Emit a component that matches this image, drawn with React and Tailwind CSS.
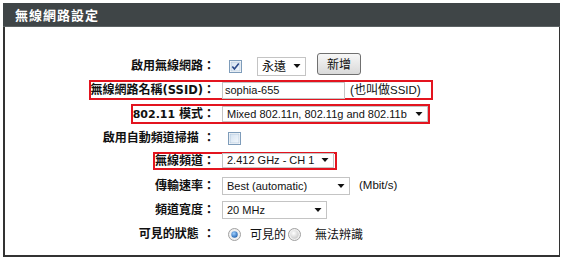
import React from "react";

const Arrow = () => (
  <svg width="8" height="5" viewBox="0 0 8 5" className="shrink-0">
    <path d="M0.5 0 L7.5 0 L4 4 Z" fill="#111" />
  </svg>
);

const Select = ({ w, text, h = "h-[18px]" }) => (
  <div
    className={`${w} ${h} flex items-center justify-between border border-[#c4c4c4] bg-white pl-[4px] pr-[4px] text-[11px] text-[#111] leading-none`}
  >
    <span className="whitespace-nowrap">{text}</span>
    <Arrow />
  </div>
);

const Checkbox = ({ checked }) => (
  <svg width="13" height="13" viewBox="0 0 13 13" className="shrink-0">
    <defs>
      <linearGradient id={checked ? "cbg1" : "cbg2"} x1="0" y1="0" x2="1" y2="1">
        <stop offset="0" stopColor="#d3e1f0" />
        <stop offset="1" stopColor="#f4f8fc" />
      </linearGradient>
    </defs>
    <rect x="0.5" y="0.5" width="12" height="12" fill="#fff" stroke="#7e9cba" />
    <rect x="2" y="2" width="9" height="9" fill={`url(#${checked ? "cbg1" : "cbg2"})`} stroke="#a9c0d8" strokeWidth="0.6" />
    {checked && (
      <path d="M3.3 6.5 L5.4 8.9 L9.8 3.4" fill="none" stroke="#2b4a8a" strokeWidth="1.6" />
    )}
  </svg>
);

const Radio = ({ checked }) => (
  <svg width="13" height="13" viewBox="0 0 13 13" className="shrink-0">
    <defs>
      <radialGradient id={checked ? "rg1" : "rg2"} cx="0.4" cy="0.35" r="0.7">
        <stop offset="0" stopColor={checked ? "#9fd0ff" : "#ffffff"} />
        <stop offset="1" stopColor={checked ? "#1d5fae" : "#c9c9c9"} />
      </radialGradient>
    </defs>
    <circle cx="6.5" cy="6.5" r="6" fill="#f0f0f0" stroke="#a0a0a0" />
    <circle cx="6.5" cy="6.5" r={checked ? 3.2 : 4.2} fill={`url(#${checked ? "rg1" : "rg2"})`} />
  </svg>
);

const Label = ({ children }) => (
  <span className="whitespace-nowrap text-[12px] font-bold leading-none text-[#111]">{children}</span>
);

const Row = ({ label, children }) => (
  <div className="flex h-[24px] items-center">
    <div className="flex w-[210px] justify-end">
      <Label>{label}</Label>
    </div>
    <div className="flex items-center pl-[7px]">{children}</div>
  </div>
);

const BoxRow = ({ label, children, cw, bh = "h-[20px]", extra = "" }) => (
  <div className="flex h-[24px] items-center">
    <div className={`flex w-[210px] justify-end ${extra}`}>
      <div className={`${bh} flex items-center border-2 border-r-0 border-[#e3141f]`}>
        <Label>{label}</Label>
      </div>
    </div>
    <div className={`${bh} ${cw} ${extra} flex items-center border-2 border-l-0 border-[#e3141f] pl-[7px]`}>
      {children}
    </div>
  </div>
);

export default function App() {
  return (
    <div className="h-[261px] w-[563px] bg-white pl-[3px] pt-[3px] font-['Liberation_Sans','Noto_Sans_CJK_TC',sans-serif]">
      <div className="w-[557px]">
        <div className="flex h-[24px] items-center border-b border-[#5c6264] bg-[#3f4547] pl-[12px]">
          <span className="text-[13px] font-bold tracking-[1px] text-white font-['Noto_Sans_CJK_TC',sans-serif]">
            無線網路設定
          </span>
        </div>
        <div className="h-[230px] border-b-2 border-l-2 border-r border-[#333] pt-[27px] font-['DejaVu_Sans','Noto_Sans_CJK_TC',sans-serif]">
          <Row label="啟用無線網路：">
            <div className="ml-[7px] mt-[1px] flex items-center">
              <Checkbox checked />
            </div>
            <div className="ml-[15px] mt-[1px] font-['Liberation_Sans','Noto_Sans_CJK_TC',sans-serif]">
              <Select w="w-[49px]" h="h-[19px]" text={<span className="text-[12px]">永遠</span>} />
            </div>
            <button className="ml-[11px] -mt-[5px] flex h-[22px] w-[44px] items-center justify-center rounded-[3px] border border-[#707070] bg-gradient-to-b from-[#f7f7f7] to-[#d9d9d9] text-[12px] text-[#111] font-['Noto_Sans_CJK_TC',sans-serif]">
              新增
            </button>
          </Row>

          <BoxRow
            label={
              <>
                無線網路名稱<span className="text-[11.5px]">(SSID)</span>：
              </>
            }
            cw="w-[218px]"
          >
            <div className="font-['Liberation_Sans','Noto_Sans_CJK_TC',sans-serif] flex items-center">
              <div className="flex h-[17px] w-[123px] items-center border border-[#c4c4c4] bg-white pl-[2px] text-[11px] text-[#111]">
                sophia-655
              </div>
              <span className="ml-[5px] whitespace-nowrap text-[12px] text-[#111]">
                (也叫做<span className="text-[11.5px]">SSID</span>)
              </span>
            </div>
          </BoxRow>

          <BoxRow
            label={
              <>
                <span className="text-[11px]">802.11 </span>模式：
              </>
            }
            cw="w-[215px]"
          >
            <div className="font-['Liberation_Sans',sans-serif]">
              <Select w="w-[206px]" h="h-[16px]" text="Mixed 802.11n, 802.11g and 802.11b" />
            </div>
          </BoxRow>

          <Row label="啟用自動頻道掃描 ：">
            <div className="ml-[6px] flex items-center">
              <Checkbox />
            </div>
          </Row>

          <BoxRow label="無線頻道：" cw="w-[122px]" bh="h-[18px]" extra="-mt-[3px]">
            <div className="font-['Liberation_Sans',sans-serif]">
              <Select w="w-[112px]" h="h-[15px]" text="2.412 GHz - CH 1" />
            </div>
          </BoxRow>

          <Row label="傳輸速率：">
            <div className="flex items-center font-['Liberation_Sans',sans-serif]">
              <Select w="w-[128px]" text="Best (automatic)" />
              <span className="ml-[9px] text-[11.5px] text-[#111]">(Mbit/s)</span>
            </div>
          </Row>

          <Row label="頻道寬度：">
            <div className="font-['Liberation_Sans',sans-serif]">
              <Select w="w-[105px]" text="20 MHz" />
            </div>
          </Row>

          <Row label="可見的狀態 ：">
            <div className="flex items-center text-[12px] text-[#111] font-['Noto_Sans_CJK_TC',sans-serif]">
              <div className="ml-[6px] flex items-center">
                <Radio checked />
              </div>
              <span className="ml-[9px]">可見的</span>
              <div className="ml-[2px] flex items-center">
                <Radio />
              </div>
              <span className="ml-[14px]">無法辨識</span>
            </div>
          </Row>
        </div>
      </div>
    </div>
  );
}
